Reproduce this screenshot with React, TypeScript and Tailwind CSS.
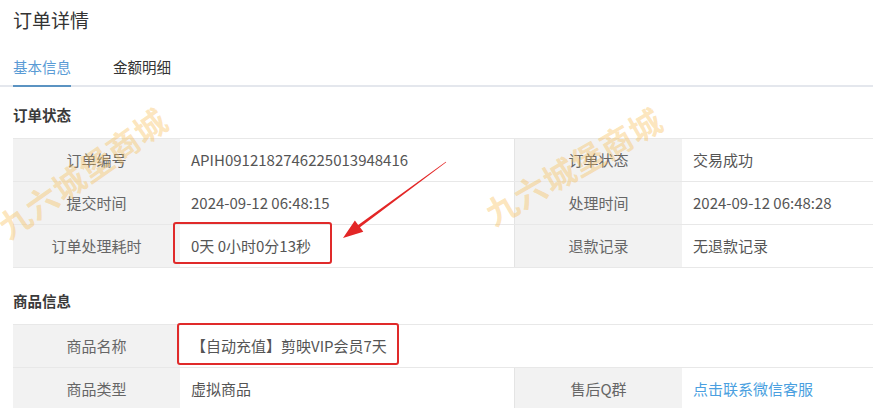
import React from 'react';

const font = { fontFamily: '"Noto Sans CJK SC", "Noto Sans", sans-serif' };

type Cell = { label: string; value: React.ReactNode };

const orderRows: [Cell, Cell][] = [
    [{ label: '订单编号', value: 'APIH0912182746225013948416' }, { label: '订单状态', value: '交易成功' }],
    [{ label: '提交时间', value: '2024-09-12 06:48:15' }, { label: '处理时间', value: '2024-09-12 06:48:28' }],
    [{ label: '订单处理耗时', value: '0天 0小时0分13秒' }, { label: '退款记录', value: '无退款记录' }],
];

const Label: React.FC<{ children: React.ReactNode; right?: boolean }> = ({ children, right }) => (
    <div
        className={`h-[42px] flex items-center justify-center bg-[#f2f2f2] text-[15px] text-[#666] ${right ? 'border-l border-[#e4e4e4]' : ''}`}
    >
        {children}
    </div>
);

const Value: React.FC<{ children: React.ReactNode; span?: boolean }> = ({ children, span }) => (
    <div className={`h-[42px] flex items-center pl-[11px] text-[15px] text-[#555] ${span ? 'col-span-3' : ''}`}>
        {children}
    </div>
);

const Watermark: React.FC<{ className: string }> = ({ className }) => (
    <div
        className={`absolute -translate-x-1/2 -translate-y-1/2 whitespace-nowrap text-[32px] leading-none font-bold tracking-[1px] text-[#f7bd55]/40 pointer-events-none ${className}`}
    >
        九六城堡商城
    </div>
);

const App: React.FC = () => {
    return (
        <div className="relative w-[873px] h-[408px] overflow-hidden bg-white" style={font}>
            {/* Title */}
            <div className="h-[40px] flex items-center pl-[13px] text-[19px] text-[#333]">订单详情</div>

            {/* Tabs */}
            <div className="flex pt-[17px] border-b-2 border-[#e4e7ed]">
                <div className="ml-[13px] pb-[8px] -mb-[2px] border-b-2 border-[#5b93c2] text-[14.5px] leading-[20px] text-[#5a9bd5]">
                    基本信息
                </div>
                <div className="ml-[42px] pb-[8px] text-[14.5px] leading-[20px] text-[#333]">金额明细</div>
            </div>

            {/* 订单状态 */}
            <div className="pl-[13px] pt-[18px] pb-[13px] text-[14.5px] leading-[20px] font-bold text-[#3a3a3a]">订单状态</div>
            <div className="ml-[13px] border-b border-[#e8e8e8]">
                {orderRows.map(([a, b]) => (
                    <div key={a.label} className="grid grid-cols-[167px_334px_168px_1fr] border-t border-[#e8e8e8]">
                        <Label>{a.label}</Label>
                        <Value>{a.value}</Value>
                        <Label right>{b.label}</Label>
                        <Value>{b.value}</Value>
                    </div>
                ))}
            </div>

            {/* 商品信息 */}
            <div className="pl-[13px] pt-[23px] pb-[13px] text-[14.5px] leading-[20px] font-bold text-[#3a3a3a]">商品信息</div>
            <div className="ml-[13px]">
                <div className="grid grid-cols-[167px_334px_168px_1fr] border-t border-[#e8e8e8]">
                    <Label>商品名称</Label>
                    <Value span>【自动充值】剪映VIP会员7天</Value>
                </div>
                <div className="grid grid-cols-[167px_334px_168px_1fr] border-t border-[#e8e8e8]">
                    <Label>商品类型</Label>
                    <Value>虚拟商品</Value>
                    <Label right>售后Q群</Label>
                    <Value>
                        <span className="text-[#4a9fe0]">点击联系微信客服</span>
                    </Value>
                </div>
            </div>

            {/* Watermarks */}
            <Watermark className="left-[82px] top-[172px] -rotate-[35deg]" />
            <Watermark className="left-[573px] top-[165px] -rotate-[30deg]" />

            {/* Annotations */}
            <div className="absolute left-[173px] top-[222px] w-[159px] h-[42px] border-2 border-[#e02a2a] rounded-[3px]" />
            <div className="absolute left-[177px] top-[323px] w-[222px] h-[42px] border-2 border-[#e02a2a] rounded-[3px]" />
            <svg className="absolute left-0 top-0 pointer-events-none" width="873" height="408">
                <polygon
                    points="343,238 363.3,231.7 360,227.3 446.2,162.2 445.8,161.8 358.2,224.9 354.9,220.5"
                    fill="#e32626"
                />
            </svg>
        </div>
    );
};

export default App;
